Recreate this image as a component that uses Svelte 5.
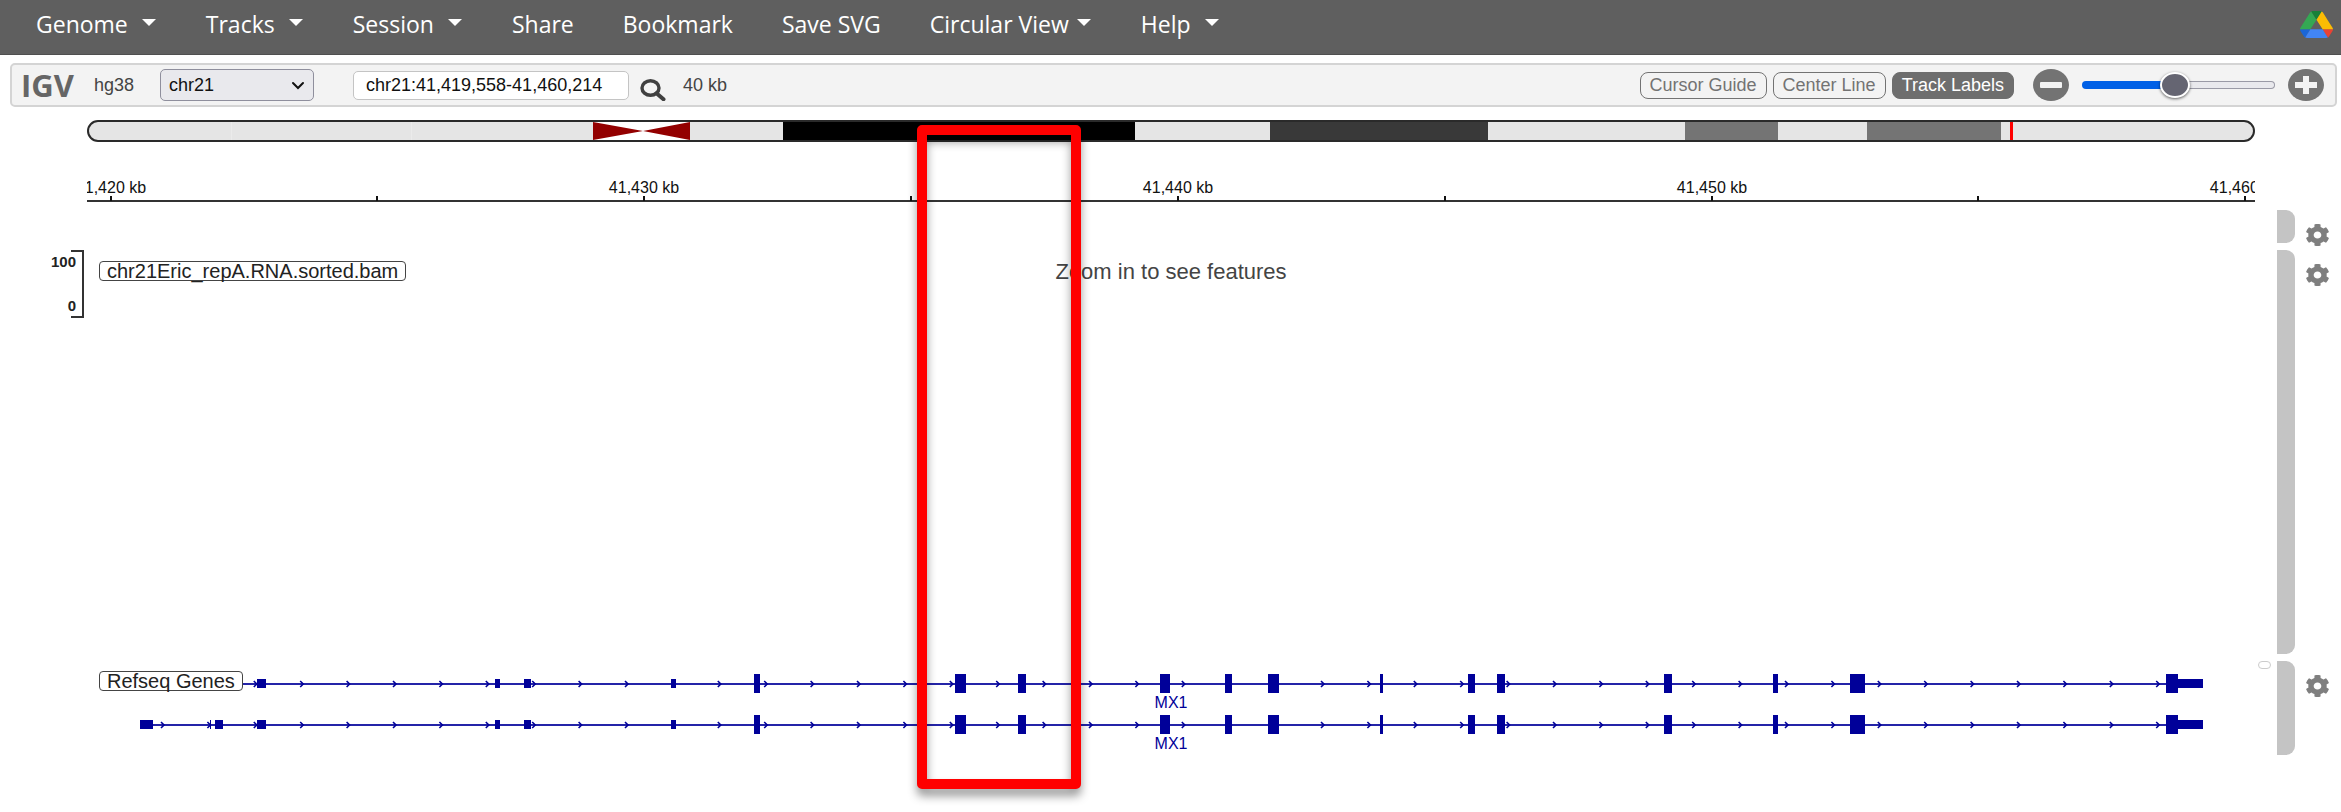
<script>
  const menu = [
    { label: 'Genome', caret: 'wide' },
    { label: 'Tracks', caret: 'wide' },
    { label: 'Session', caret: 'wide' },
    { label: 'Share' },
    { label: 'Bookmark' },
    { label: 'Save SVG' },
    { label: 'Circular View', caret: 'tight' },
    { label: 'Help', caret: 'wide' }
  ];

  // Canvas units: the viewport is 2168 units wide, drawn as percentages.
  const SPAN = 2168;
  const pct = (v) => `${(v / SPAN) * 100}%`;

  const bands = [
    { from: 696, to: 1048, fill: '#000000' },
    { from: 1183, to: 1401, fill: '#393939' },
    { from: 1598, to: 1691, fill: '#747474' },
    { from: 1780, to: 1914, fill: '#747474' }
  ];
  const seams = [144, 324];

  const ticks = [
    { x: 24, label: '41,420 kb' },
    { x: 290 },
    { x: 557, label: '41,430 kb' },
    { x: 824 },
    { x: 1091, label: '41,440 kb' },
    { x: 1358 },
    { x: 1625, label: '41,450 kb' },
    { x: 1891 },
    { x: 2158, label: '41,460 kb' }
  ];

  // [start, width] of the exons shared by both transcripts
  const thin = [[170, 9], [408, 5], [437, 7], [584, 5], [2091, 25]];
  const thick = [
    [667, 6], [868, 11], [931, 8], [1073, 10], [1138, 7], [1181, 11], [1293, 3],
    [1381, 7], [1410, 8], [1577, 8], [1686, 5], [1763, 15], [2079, 12]
  ];
  const genes = [
    { y: 22, start: 125, extra: [], name: 'MX1' },
    { y: 63, start: 53, extra: [[53, 13], [123, 1], [128, 8]], name: 'MX1' }
  ];
  const arrows = Array.from({ length: 44 }, (_, i) => 77 + i * 46.4);

  let zoom = $state(48);
  let locus = $state('chr21:41,419,558-41,460,214');
</script>

{#snippet gear()}
  <button class="gear" aria-label="Track settings">
    <svg viewBox="16 8 480 496" preserveAspectRatio="none" aria-hidden="true">
      <path fill="#7f7f7f" d="M487.4 315.7l-42.6-24.6c4.3-23.2 4.3-47 0-70.2l42.6-24.6c4.9-2.8 7.1-8.6 5.5-14-11.1-35.6-30-67.8-54.7-94.6-3.8-4.1-10-5.1-14.8-2.3L380.8 110c-17.9-15.4-38.5-27.3-60.8-35.1V25.8c0-5.6-3.9-10.5-9.4-11.7-36.7-8.2-74.3-7.8-109.2 0-5.5 1.2-9.4 6.1-9.4 11.7V75c-22.2 7.9-42.8 19.8-60.8 35.1L88.7 85.5c-4.9-2.8-11-1.9-14.8 2.3-24.7 26.7-43.6 58.9-54.7 94.6-1.7 5.4.6 11.2 5.5 14L67.3 221c-4.3 23.2-4.3 47 0 70.2l-42.6 24.6c-4.9 2.8-7.1 8.6-5.5 14 11.1 35.6 30 67.8 54.7 94.6 3.8 4.1 10 5.1 14.8 2.3l42.6-24.6c17.9 15.4 38.5 27.3 60.8 35.1v49.2c0 5.6 3.9 10.5 9.4 11.7 36.7 8.2 74.3 7.8 109.2 0 5.5-1.2 9.4-6.1 9.4-11.7v-49.2c22.2-7.9 42.8-19.8 60.8-35.1l42.6 24.6c4.9 2.8 11 1.9 14.8-2.3 24.7-26.7 43.6-58.9 54.7-94.6 1.5-5.5-.7-11.3-5.6-14.1zM256 336c-44.1 0-80-35.9-80-80s35.9-80 80-80 80 35.9 80 80-35.9 80-80 80z" />
    </svg>
  </button>
{/snippet}

<nav class="navbar">
  {#each menu as item}
    <button class="menu-item">
      {item.label}
      {#if item.caret}
        <svg class="caret {item.caret}" viewBox="0 0 14 7" aria-hidden="true"><path d="M0 0h14L7 7z" fill="#fff" /></svg>
      {/if}
    </button>
  {/each}
  <button class="drive" aria-label="Google Drive">
    <svg viewBox="0 0 87.3 78" preserveAspectRatio="none" aria-hidden="true">
      <path d="m6.6 66.85 3.85 6.65c.8 1.4 1.95 2.5 3.3 3.3l13.75-23.8h-27.5c0 1.55.4 3.1 1.2 4.5z" fill="#1a66d8" />
      <path d="m43.65 25-13.75-23.8c-1.35.8-2.5 1.9-3.3 3.3l-25.4 44a9.06 9.06 0 0 0-1.2 4.5h27.5z" fill="#34a853" />
      <path d="m73.55 76.8c1.35-.8 2.5-1.9 3.3-3.3l1.6-2.75 7.65-13.25c.8-1.4 1.2-2.95 1.2-4.5h-27.5l5.85 11.5z" fill="#ea4335" />
      <path d="m43.65 25 13.75-23.8c-1.35-.8-2.9-1.2-4.5-1.2h-18.5c-1.6 0-3.15.45-4.5 1.2z" fill="#188038" />
      <path d="m59.8 53h-32.3l-13.75 23.8c1.35.8 2.9 1.2 4.5 1.2h50.8c1.6 0 3.15-.45 4.5-1.2z" fill="#4285f4" />
      <path d="m73.4 26.5-12.7-22c-.8-1.4-1.95-2.5-3.3-3.3l-13.75 23.8 16.15 28h27.45c0-1.55-.4-3.1-1.2-4.5z" fill="#fbbc04" />
    </svg>
  </button>
</nav>

<header class="toolbar">
  <span class="logo">IGV</span>
  <span class="genome">hg38</span>
  <div class="select">
    <select aria-label="Chromosome"><option>chr21</option></select>
    <svg viewBox="0 0 14 9" aria-hidden="true"><path d="M2 2l5 5 5-5" fill="none" stroke="#111" stroke-width="2" stroke-linecap="round" /></svg>
  </div>
  <input class="locus" type="text" aria-label="Locus" bind:value={locus} />
  <button class="search" aria-label="Search">
    <svg viewBox="0 0 26 22" preserveAspectRatio="none" aria-hidden="true">
      <ellipse cx="10.5" cy="9" rx="8.5" ry="7.3" fill="none" stroke="#404040" stroke-width="3.4" />
      <path d="M16.5 14.3l7 6" stroke="#404040" stroke-width="4" stroke-linecap="round" />
    </svg>
  </button>
  <span class="size">40 kb</span>
  <div class="toggles">
    <button>Cursor Guide</button>
    <button>Center Line</button>
    <button class="on">Track Labels</button>
  </div>
  <button class="round" aria-label="Zoom out">
    <svg viewBox="0 0 36 32" aria-hidden="true"><ellipse cx="18" cy="16" rx="18" ry="16" fill="#737373" /><rect x="7" y="13" width="22" height="6" rx="1" fill="#f3f3f3" /></svg>
  </button>
  <input class="slider" type="range" min="0" max="100" aria-label="Zoom level" bind:value={zoom} style="--fill: {zoom}%" />
  <button class="round" aria-label="Zoom in">
    <svg viewBox="0 0 36 32" aria-hidden="true"><ellipse cx="18" cy="16" rx="18" ry="16" fill="#737373" /><path d="M7 13h8V7h6v6h8v6h-8v6h-6v-6H7z" fill="#f3f3f3" /></svg>
  </button>
</header>

<main class="browser">
  <div class="row">
    <div class="canvas ideogram">
      <svg class="bands" aria-hidden="true">
        {#each seams as x}
          <rect x={pct(x)} y="0" width="1" height="100%" fill="#ebebeb" />
        {/each}
        {#each bands as b}
          <rect x={pct(b.from)} y="0" width={pct(b.to - b.from)} height="100%" fill={b.fill} />
        {/each}
        <svg x={pct(506)} y="0" width={pct(97)} height="100%" viewBox="0 0 97 20" preserveAspectRatio="none">
          <rect width="97" height="20" fill="#fff" />
          <path d="M0 0L50 10L0 20zM97 0L50 10L97 20z" fill="#930000" />
        </svg>
        <rect x={pct(1923)} y="0" width="3" height="100%" fill="#f00" />
      </svg>
    </div>
  </div>

  <div class="row ruler-row">
    <svg class="canvas ruler">
      <rect x="0" y="58" width="100%" height="2" fill="#333" />
      {#each ticks as t}
        <rect x={pct(t.x - 1)} y="54" width="2" height="5" fill="#111" />
        {#if t.label}
          <text x={pct(t.x)} y="51" text-anchor="middle">{t.label}</text>
        {/if}
      {/each}
    </svg>
    <div class="side"><span class="scroll"></span>{@render gear()}</div>
  </div>

  <div class="row alignment-row">
    <div class="axis">
      <div class="axis-values"><span>100</span><span>0</span></div>
      <div class="bracket"></div>
    </div>
    <div class="canvas alignments">
      <span class="track-label">chr21Eric_repA.RNA.sorted.bam</span>
      <p class="notice">Zoom in to see features</p>
    </div>
    <div class="side"><span class="scroll"></span>{@render gear()}</div>
  </div>

  <div class="row gene-row">
    <div class="canvas genes">
      <svg class="gene-map">
        {#each genes as g}
          <rect x={pct(g.start)} y={g.y} width={pct(2116 - g.start)} height="2" fill="#2424a8" />
          {#each arrows as a}
            {#if a > g.start}
              <svg x={pct(a)} y={g.y} overflow="visible"><path d="M-3 -2L0 1L-3 4" fill="none" stroke="#000099" stroke-width="1.6" /></svg>
            {/if}
          {/each}
          {#each [...g.extra, ...thin] as [x, w]}
            <rect x={pct(x)} y={g.y - 4} width={pct(w)} height="9" fill="#000099" />
          {/each}
          {#each thick as [x, w]}
            <rect x={pct(x)} y={g.y - 9} width={pct(w)} height="19" fill="#000099" />
          {/each}
          <text x={pct(1084)} y={g.y + 25} text-anchor="middle">{g.name}</text>
        {/each}
      </svg>
      <span class="track-label gene-label">Refseq Genes</span>
    </div>
    <div class="side"><span class="pill"></span><span class="scroll"></span>{@render gear()}</div>
  </div>

  <div class="highlight"></div>
</main>

<style>
  :global(body) {
    background: #fff;
    font-family: 'Liberation Sans', Arial, sans-serif;
  }
  button {
    font: inherit;
    color: inherit;
    background: none;
    border: 0;
    padding: 0;
    cursor: pointer;
  }
  svg {
    display: block;
  }

  .navbar {
    display: flex;
    align-items: center;
    gap: 49px;
    box-sizing: border-box;
    height: 55px;
    padding: 0 8px 6px 36px;
    background: #5f5f5f;
    border-bottom: 1px solid #4f4f4f;
    color: #fff;
    font-family: 'Open Sans', 'Noto Sans', sans-serif;
    font-size: 23px;
    line-height: 32px;
  }
  .menu-item {
    display: flex;
    align-items: center;
    white-space: nowrap;
  }
  .caret {
    width: 14px;
    height: 7px;
    margin: 0 1px 4px 14px;
  }
  .caret.tight {
    margin-left: 8px;
  }
  .drive {
    margin-left: auto;
  }
  .drive svg {
    width: 33px;
    height: 27px;
  }

  .toolbar {
    display: flex;
    align-items: center;
    box-sizing: border-box;
    height: 44px;
    margin: 8px 4px 0 10px;
    padding: 0 11px 0 9px;
    background: #f3f3f3;
    border: 2px solid #d4d4d4;
    border-radius: 5px;
    color: #444;
    font-size: 18px;
  }
  .logo {
    width: 73px;
    color: #666;
    font-family: 'Open Sans', sans-serif;
    font-size: 31px;
    font-weight: 700;
    line-height: 40px;
  }
  .genome {
    width: 66px;
  }
  .select {
    position: relative;
    width: 154px;
  }
  .select select {
    appearance: none;
    display: block;
    box-sizing: border-box;
    width: 100%;
    height: 32px;
    padding: 0 8px;
    background: #e9e9ed;
    border: 1px solid #8f8f9d;
    border-radius: 5px;
    color: #111;
    font: inherit;
  }
  .select svg {
    position: absolute;
    right: 9px;
    top: 12px;
    width: 14px;
    height: 9px;
    pointer-events: none;
  }
  .locus {
    box-sizing: border-box;
    width: 276px;
    height: 29px;
    margin-left: 39px;
    padding: 0 12px;
    background: #fff;
    border: 1px solid #c4c4c4;
    border-radius: 5px;
    color: #111;
    font: inherit;
  }
  .search {
    margin: 10px 17px 0 11px;
  }
  .search svg {
    width: 26px;
    height: 22px;
  }
  .toggles {
    display: flex;
    gap: 6px;
    margin-left: auto;
    margin-right: 19px;
  }
  .toggles button {
    box-sizing: border-box;
    height: 27px;
    padding: 0 9px;
    border: 1px solid #737373;
    border-radius: 8px;
    color: #737373;
    line-height: 24px;
    white-space: nowrap;
  }
  .toggles .on {
    background: #6e6e6e;
    border-color: #6e6e6e;
    color: #fff;
  }
  .round svg {
    width: 36px;
    height: 32px;
  }
  .slider {
    appearance: none;
    width: 193px;
    height: 30px;
    margin: 0 13px;
    background: none;
  }
  .slider::-webkit-slider-runnable-track {
    box-sizing: border-box;
    height: 8px;
    border: 1px solid transparent;
    border-radius: 4px;
    background:
      linear-gradient(to right, #0060e6 var(--fill), #e9e9ed var(--fill)) padding-box,
      linear-gradient(to right, #0060e6 var(--fill), #9a9aa6 var(--fill)) border-box;
  }
  .slider::-webkit-slider-thumb {
    appearance: none;
    box-sizing: border-box;
    width: 30px;
    height: 26px;
    margin-top: -10px;
    border: 2px solid #fff;
    border-radius: 50%;
    background: #656572;
    box-shadow: 0 1px 3px rgba(0, 0, 0, 0.6);
  }

  .browser {
    position: relative;
    padding: 13px 0 57px;
  }
  .row {
    display: grid;
    grid-template-columns: 87px 1fr 86px;
  }
  .canvas {
    grid-column: 2;
    width: 100%;
    min-width: 0;
  }
  .side {
    position: relative;
    grid-column: 3;
    display: flex;
    align-items: flex-start;
    gap: 11px;
    padding-left: 22px;
  }
  .scroll {
    width: 18px;
    height: 100%;
    background: #c4c4c4;
    border-radius: 0 9px 9px 0;
  }
  .gear {
    margin-top: 14px;
  }
  .gear svg {
    width: 23px;
    height: 22px;
  }
  .pill {
    position: absolute;
    left: 3px;
    top: 0;
    box-sizing: border-box;
    width: 13px;
    height: 8px;
    border: 1px solid #ccc;
    border-radius: 4px;
  }

  .ideogram {
    box-sizing: border-box;
    height: 22px;
    background: #e5e5e5;
    border: 2px solid #2a2a2a;
    border-radius: 12px;
    overflow: hidden;
  }
  .bands {
    width: calc(100% + 4px);
    height: 100%;
    margin: 0 -2px;
  }

  .ruler-row {
    height: 101px;
  }
  .ruler {
    height: 62px;
    overflow: hidden;
  }
  .ruler-row .side {
    align-self: end;
    height: 33px;
  }
  .ruler text {
    fill: #111;
    font-size: 16px;
  }

  .alignment-row {
    height: 404px;
    margin-top: 7px;
  }
  .axis {
    display: flex;
    justify-content: flex-end;
    height: 68px;
    padding-right: 3px;
  }
  .axis-values {
    display: flex;
    flex-direction: column;
    justify-content: space-between;
    margin-right: -13px;
    padding: 4px 8px 4px 0;
    color: #222;
    font-size: 15px;
    font-weight: 700;
    line-height: 16px;
    text-align: right;
  }
  .bracket {
    box-sizing: border-box;
    width: 13px;
    border: 2px solid #333;
    border-left: 0;
  }
  .alignments {
    position: relative;
    padding-top: 11px;
    box-sizing: border-box;
  }
  .track-label {
    display: inline-block;
    box-sizing: border-box;
    height: 20px;
    margin-left: 12px;
    padding: 0 7px;
    background: #fff;
    border: 1px solid #444;
    border-radius: 4px;
    color: #222;
    font-size: 20px;
    line-height: 18px;
    white-space: nowrap;
  }
  .notice {
    position: absolute;
    inset: 10px 0 auto 0;
    margin: 0;
    color: #444;
    font-size: 22px;
    line-height: 24px;
    text-align: center;
  }

  .gene-row {
    height: 94px;
    margin-top: 7px;
  }
  .genes {
    position: relative;
  }
  .gene-map {
    width: 100%;
    height: 94px;
  }
  .gene-map text {
    fill: #000099;
    font-size: 16px;
  }
  .gene-label {
    position: absolute;
    left: 0;
    top: 10px;
  }

  .highlight {
    position: absolute;
    left: 39.17%;
    top: 18px;
    box-sizing: border-box;
    width: 7%;
    height: 664px;
    border: 10px solid #f00;
    border-radius: 5px;
    filter: drop-shadow(0 7px 5px rgba(0, 0, 0, 0.4));
    pointer-events: none;
  }
</style>
